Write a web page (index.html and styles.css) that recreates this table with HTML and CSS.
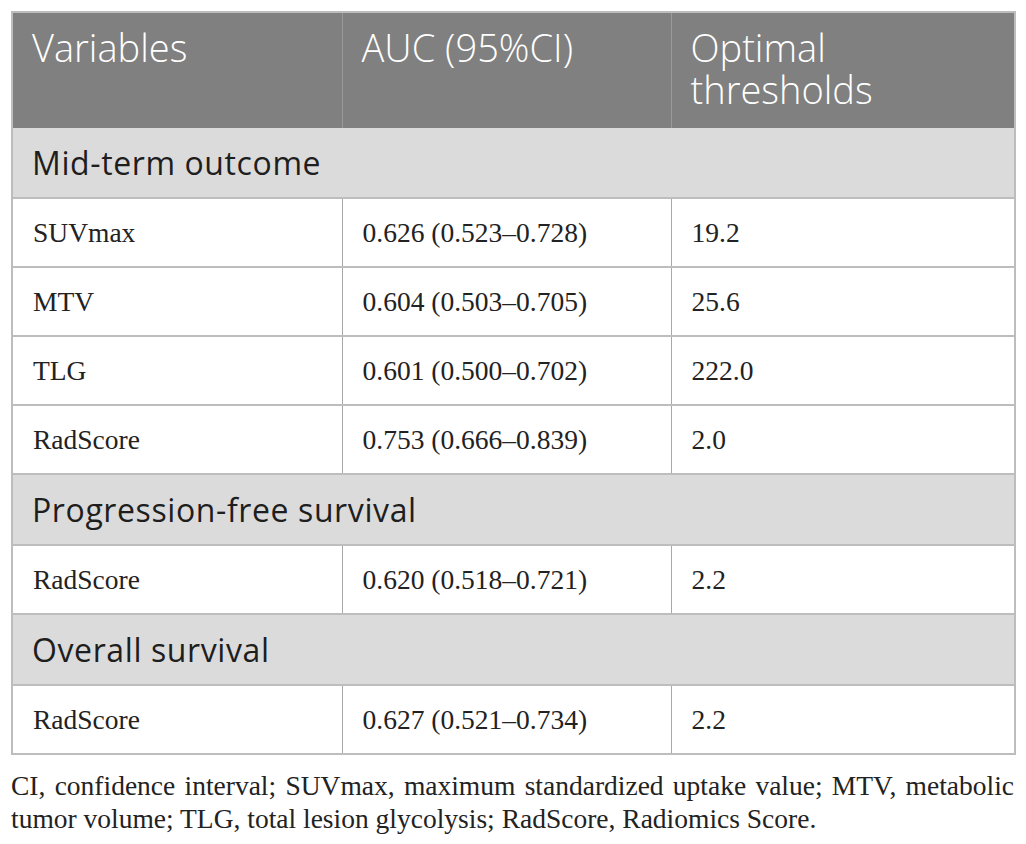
FILE: index.html
```html
<!DOCTYPE html>
<html>
<head>
<meta charset="utf-8">
<link rel="stylesheet" href="styles.css">
</head>
<body>
<div class="wrap">
<table class="tbl">
  <colgroup>
    <col class="c1"><col class="c2"><col class="c3">
  </colgroup>
  <thead>
    <tr>
      <th>Variables</th>
      <th>AUC (95%CI)</th>
      <th>Optimal<br>thresholds</th>
    </tr>
  </thead>
  <tbody>
    <tr class="group"><td colspan="3">Mid-term outcome</td></tr>
    <tr><td>SUVmax</td><td>0.626 (0.523–0.728)</td><td>19.2</td></tr>
    <tr><td>MTV</td><td>0.604 (0.503–0.705)</td><td>25.6</td></tr>
    <tr><td>TLG</td><td>0.601 (0.500–0.702)</td><td>222.0</td></tr>
    <tr><td>RadScore</td><td>0.753 (0.666–0.839)</td><td>2.0</td></tr>
    <tr class="group"><td colspan="3">Progression-free survival</td></tr>
    <tr><td>RadScore</td><td>0.620 (0.518–0.721)</td><td>2.2</td></tr>
    <tr class="group"><td colspan="3">Overall survival</td></tr>
    <tr><td>RadScore</td><td>0.627 (0.521–0.734)</td><td>2.2</td></tr>
  </tbody>
</table>
<p class="note">CI, confidence interval; SUVmax, maximum standardized uptake value; MTV, metabolic tumor volume; TLG, total lesion glycolysis; RadScore, Radiomics Score.</p>
</div>
</body>
</html>
```
FILE: styles.css
```css
html, body {
  margin: 0;
  padding: 0;
  background: #ffffff;
}
.wrap {
  padding: 11px 12px 0 11px;
  width: 1003px;
}
.tbl {
  width: 1003px;
  border-collapse: collapse;
  table-layout: fixed;
  border: 2px solid #bdbdbd;
}
.c1 { width: 330px; }
.c2 { width: 329px; }
.c3 { width: 344px; }
.tbl th {
  background: #808080;
  color: #ffffff;
  font-family: "Open Sans", sans-serif;
  font-weight: 300;
  font-size: 38px;
  line-height: 42px;
  text-align: left;
  vertical-align: top;
  padding: 13px 19px 18px 19px;
  height: 84px;
  border-left: 1px solid #9a9a9a;
}
.tbl th:first-child { border-left: none; }
.tbl td {
  font-family: "Liberation Serif", serif;
  font-size: 27.5px;
  color: #222222;
  padding: 0 20px;
  height: 67px;
  border-top: 2px solid #bdbdbd;
  border-left: 1px solid #a8a8a8;
  vertical-align: middle;
}
.tbl td:first-child { border-left: none; }
.tbl tr.group td {
  background: #dcdbdb;
  font-family: "Open Sans", sans-serif;
  font-size: 32px;
  letter-spacing: 0.6px;
  color: #1e1e1e;
  height: 69px;
  padding: 0 19px;
  border-top: 2px solid #bdbdbd;
}
.tbl thead + tbody tr:first-child td { border-top: none; }
.note {
  margin: 14px 0 0 0;
  font-family: "Liberation Serif", serif;
  font-size: 27.5px;
  line-height: 33px;
  color: #222222;
  text-align: justify;
}
```
